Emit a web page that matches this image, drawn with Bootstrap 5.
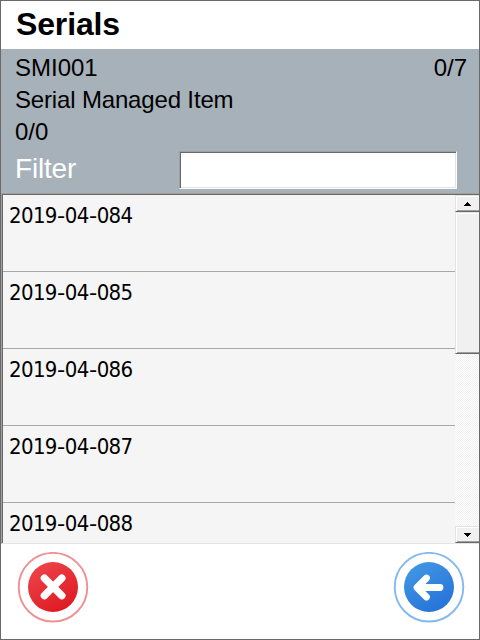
<!DOCTYPE html>
<html lang="en">
<head>
<meta charset="utf-8">
<meta name="viewport" content="width=device-width, initial-scale=1">
<title>Serials</title>
<link href="https://cdn.jsdelivr.net/npm/bootstrap@5.3.0/dist/css/bootstrap.min.css" rel="stylesheet">
<style>
body{font-family:"Liberation Sans",Arial,sans-serif;color:#000;background:#fff}
.screen{width:480px;height:640px;border:1px solid #696969}
.title-bar{height:48px;padding:0 0 1px 15px;font-size:32px;line-height:47px;letter-spacing:-.15px}
.info{height:144px;padding:3px 12px 0 14px;background:#a7b1b9;font-size:24px;line-height:32px}
.info .line{height:32px}
.item-name{letter-spacing:-.16px}
.filter-line{height:40px;padding-right:10px}
.filter-line label{font-size:28px;line-height:42px;color:#fff;letter-spacing:-.2px}
.filter-box{width:278px;height:38px;margin-top:3px;padding:0 6px;border:1px solid;border-color:#a0a0a0 #fff #fff #a0a0a0;box-shadow:inset 1px 1px #696969,inset -1px -1px #e3e3e3;background:#fff;border-radius:0;outline:0}
.list-frame{height:351px;border-top:1px solid #a0a0a0;border-left:1px solid #a0a0a0;border-bottom:1px solid #e3e3e3}
.list-inner{border-top:1px solid #696969;border-left:1px solid #696969}
.serials{background:#f5f5f5}
.serial{height:77px;flex:none;padding:5px 6px;border-bottom:1px solid #a8a8a8;font-family:"DejaVu Sans Condensed","DejaVu Sans",sans-serif;font-stretch:condensed;font-size:22px;line-height:32px;letter-spacing:-.65px}
.serial i{font-style:normal;display:inline-block;width:8px;transform:scaleX(1.15);transform-origin:left}
.scroll{width:24px;background:repeating-conic-gradient(#fff 0 25%,#f0f0f0 0 50%) 0 0/2px 2px}
.sb{background:#f0f0f0;border:1px solid;border-color:#e3e3e3 #696969 #696969 #e3e3e3;box-shadow:inset 1px 1px #fff,inset 0 -1px #a0a0a0;flex:none;border-right:0}
.sb-end{height:17px}
.sb-thumb{height:142px}
.round-btn{width:72px;height:72px}
.actions{padding:8px 14px 0 16px}
</style>
<script src="https://cdn.jsdelivr.net/npm/bootstrap@5.3.0/dist/js/bootstrap.bundle.min.js"></script>
</head>
<body>
<div class="screen d-flex flex-column overflow-hidden">
  <header class="title-bar fw-bold">Serials</header>
  <section class="info">
    <div class="line d-flex justify-content-between"><span>SMI001</span><span>0/7</span></div>
    <div class="line item-name">Serial Managed Item</div>
    <div class="line">0/0</div>
    <div class="filter-line d-flex justify-content-between align-items-start">
      <label for="filter">Filter</label>
      <input id="filter" class="filter-box" type="text">
    </div>
  </section>
  <main class="list-frame d-flex">
    <div class="list-inner d-flex flex-fill overflow-hidden">
      <div class="serials d-flex flex-column flex-fill overflow-hidden">
        <div class="serial">2019<i>-</i>04<i>-</i>084</div>
        <div class="serial">2019<i>-</i>04<i>-</i>085</div>
        <div class="serial">2019<i>-</i>04<i>-</i>086</div>
        <div class="serial">2019<i>-</i>04<i>-</i>087</div>
        <div class="serial">2019<i>-</i>04<i>-</i>088</div>
      </div>
      <div class="scroll d-flex flex-column">
        <div class="sb sb-end d-flex justify-content-center align-items-center"><svg width="7" height="4" shape-rendering="crispEdges"><path d="M3 0h1v1h1v1h1v1h1v1H0V3h1V2h1V1h1z"/></svg></div>
        <div class="sb sb-thumb"></div>
        <div class="sb sb-end d-flex justify-content-center align-items-center mt-auto"><svg width="7" height="4" shape-rendering="crispEdges"><path d="M0 0h7v1H6v1H5v1H4v1H3V3H2V2H1V1H0z"/></svg></div>
      </div>
    </div>
  </main>
  <footer class="actions d-flex justify-content-between">
    <button class="round-btn border-0 bg-transparent p-0 d-flex" aria-label="Cancel">
      <svg width="72" height="72" viewBox="0 0 72 72">
        <defs><linearGradient id="red" x1=".2" y1="0" x2=".8" y2="1"><stop stop-color="#ee444b"/><stop offset="1" stop-color="#de1820"/></linearGradient></defs>
        <circle cx="36" cy="35.200" r="34.300" fill="#fff" stroke="#ee9094" stroke-width="1.900"/>
        <circle cx="36" cy="35" r="25" fill="url(#red)"/>
        <path d="M27.400 26.200l17.400 17.400M44.800 26.200l-17.400 17.400" stroke="#fff" stroke-width="7.400" stroke-linecap="round"/>
      </svg>
    </button>
    <button class="round-btn border-0 bg-transparent p-0 d-flex" aria-label="Back">
      <svg width="72" height="72" viewBox="0 0 72 72">
        <defs><linearGradient id="blue" x1=".2" y1="0" x2=".8" y2="1"><stop stop-color="#4297e4"/><stop offset="1" stop-color="#2471d8"/></linearGradient></defs>
        <circle cx="36" cy="35.200" r="34.300" fill="#fff" stroke="#83b9ee" stroke-width="1.900"/>
        <circle cx="36" cy="35" r="25" fill="url(#blue)"/>
        <path d="M33.500 26L24 35.500l9.500 9.500M25 35.500h22" fill="none" stroke="#fff" stroke-width="6.800" stroke-linecap="round" stroke-linejoin="round"/>
      </svg>
    </button>
  </footer>
</div>
</body>
</html>
